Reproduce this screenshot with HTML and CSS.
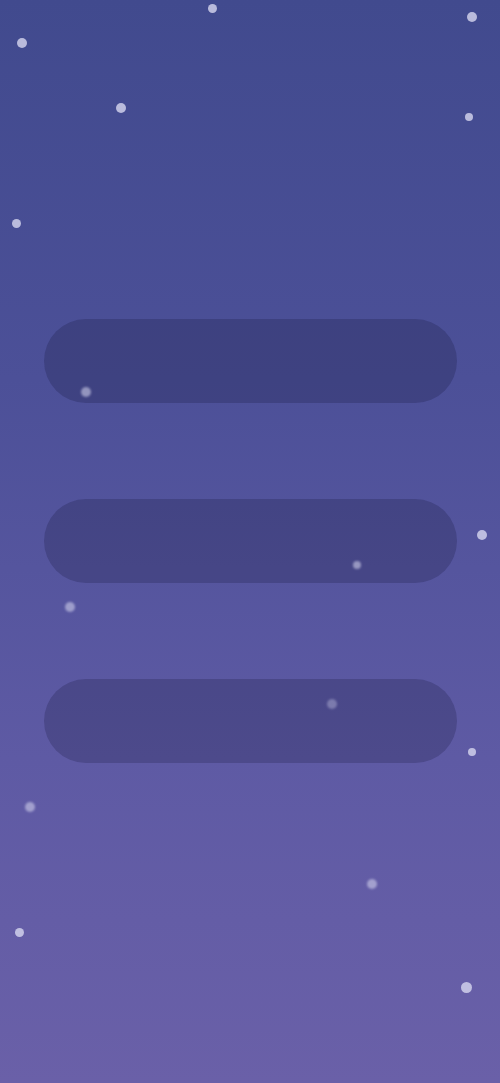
FILE: index.html
```html
<!DOCTYPE html>
<html>
<head>
<meta charset="utf-8">
<link rel="stylesheet" href="styles.css">
</head>
<body>
<div class="screen">
  <div class="stars">
    <span class="star s9" style="left:208px;top:4px"></span>
    <span class="star s10" style="left:17px;top:38px"></span>
    <span class="star s10" style="left:467px;top:12px"></span>
    <span class="star s10" style="left:116px;top:103px"></span>
    <span class="star s8" style="left:465px;top:113px"></span>
    <span class="star s9" style="left:12px;top:219px"></span>
    <span class="star s10 dim" style="left:81px;top:387px"></span>
    <span class="star s10" style="left:477px;top:530px"></span>
    <span class="star s8 dim" style="left:353px;top:561px"></span>
    <span class="star s10 dim" style="left:65px;top:602px"></span>
    <span class="star s10 faint" style="left:327px;top:699px"></span>
    <span class="star s8" style="left:468px;top:748px"></span>
    <span class="star s10 dim" style="left:25px;top:802px"></span>
    <span class="star s10 dim" style="left:367px;top:879px"></span>
    <span class="star s9" style="left:15px;top:928px"></span>
    <span class="star s11" style="left:461px;top:982px"></span>
  </div>
  <div class="pills">
    <div class="pill"></div>
    <div class="pill"></div>
    <div class="pill"></div>
  </div>
</div>
</body>
</html>
```

FILE: styles.css
```css
html, body {
  margin: 0;
  padding: 0;
}
body {
  font-family: "Liberation Sans", Arial, sans-serif;
}
.screen {
  position: relative;
  width: 500px;
  height: 1083px;
  overflow: hidden;
  background: linear-gradient(180deg, #414a8e 0%, #4c5098 35%, #5e5aa4 70%, #6a60a8 100%);
}
.pills {
  display: flex;
  flex-direction: column;
  gap: 96px;
  padding: 319px 43px 0 44px;
}
.pill {
  height: 84px;
  border-radius: 42px;
  background: rgba(10, 10, 40, 0.2);
}
.stars {
  position: absolute;
  inset: 0;
  z-index: 2;
  pointer-events: none;
}
.star {
  position: absolute;
  border-radius: 50%;
  background: #d8d8f0;
  opacity: 0.8;
  filter: blur(0.6px);
}
.s8 { width: 8px; height: 8px; }
.s9 { width: 9px; height: 9px; }
.s10 { width: 10px; height: 10px; }
.s11 { width: 11px; height: 11px; }
.dim { opacity: 0.55; filter: blur(1px); }
.faint { opacity: 0.35; filter: blur(1.2px); }
```
